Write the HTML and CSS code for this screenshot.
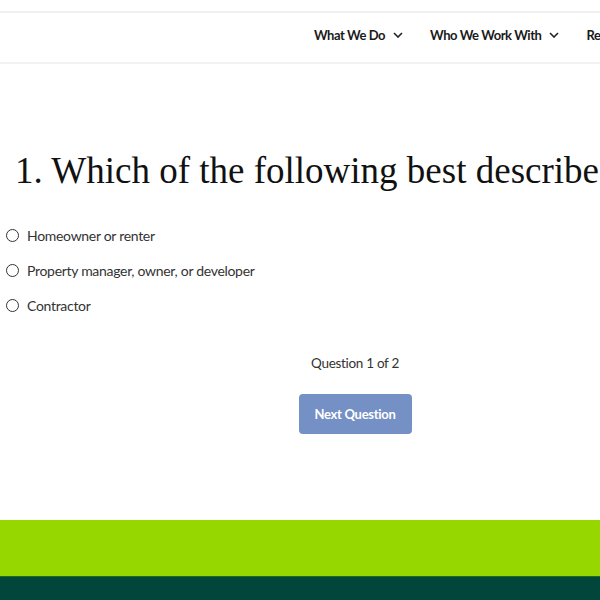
FILE: index.html
```html
<!DOCTYPE html>
<html>
<head>
<meta charset="utf-8">
<link rel="stylesheet" href="styles.css">
</head>
<body>
<div class="page">
  <header class="site-header">
    <nav class="nav">
      <a class="nav-item">What We Do <svg class="chev" viewBox="0 0 10 6"><path d="M1 1l4 4 4-4" fill="none" stroke="#222" stroke-width="1.6"/></svg></a>
      <a class="nav-item">Who We Work With <svg class="chev" viewBox="0 0 10 6"><path d="M1 1l4 4 4-4" fill="none" stroke="#222" stroke-width="1.6"/></svg></a>
      <a class="nav-item">Resources <svg class="chev" viewBox="0 0 10 6"><path d="M1 1l4 4 4-4" fill="none" stroke="#222" stroke-width="1.6"/></svg></a>
    </nav>
  </header>
  <main class="quiz">
    <h1 class="question">1. Which of the following best describes you?</h1>
    <ul class="options">
      <li class="option"><span class="radio"></span>Homeowner or renter</li>
      <li class="option"><span class="radio"></span>Property manager, owner, or developer</li>
      <li class="option"><span class="radio"></span>Contractor</li>
    </ul>
    <div class="progress">Question 1 of 2</div>
    <div class="actions"><button class="next-btn">Next Question</button></div>
  </main>
  <div class="band-green"></div>
  <footer class="band-dark"></footer>
</div>
</body>
</html>
```
FILE: styles.css
```css
html, body { margin: 0; padding: 0; background: #fff; }
body { font-family: "Source Sans Pro", Lato, "Noto Sans", sans-serif; color: #222; overflow: hidden; }
.page { width: 600px; height: 600px; overflow: hidden; padding-top: 11px; box-sizing: border-box; }
.site-header { border-top: 2px solid #efefef; border-bottom: 2px solid #f2f2f2; height: 49px; display: flex; align-items: center; overflow: hidden; }
.nav { display: flex; gap: 27px; margin: 0 0 6px 314px; white-space: nowrap; }
.nav-item { font-size: 13px; font-weight: 700; letter-spacing: -0.45px; color: #1a1a1a; display: flex; align-items: center; gap: 8px; }
.chev { width: 10px; height: 6px; }
.quiz { height: 456px; }
.question { font-family: "Liberation Serif", "DejaVu Serif", serif; font-weight: 400; font-size: 37px; margin: 0; padding: 84px 0 0 15px; white-space: nowrap; color: #111; line-height: 46px; }
.options { list-style: none; margin: 24px 0 0; padding: 0 0 0 6px; }
.option { display: flex; align-items: center; gap: 8px; height: 35px; font-size: 14px; letter-spacing: -0.3px; color: #333; }
.radio { width: 11px; height: 11px; border: 1.4px solid #333; border-radius: 50%; }
.progress { text-align: center; font-size: 13.5px; letter-spacing: -0.3px; color: #333; margin: 32px 0 0 110px; }
.actions { display: flex; justify-content: center; margin: 23px 0 0 110px; }
.next-btn { width: 113px; height: 40px; background: #7490c4; color: #fff; border: none; border-radius: 4px; font-family: inherit; font-weight: 700; font-size: 13px; letter-spacing: -0.3px; }
.band-green { height: 56px; background: #96d700; border-bottom: 1px solid #1d6a1a; }
.band-dark { height: 40px; background: #02453a; }
```
